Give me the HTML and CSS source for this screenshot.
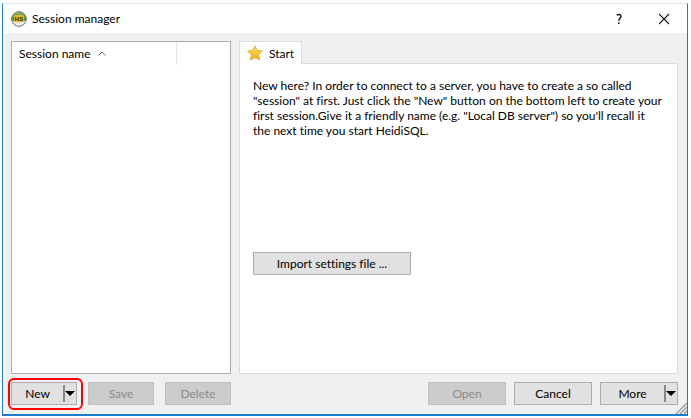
FILE: index.html
```html
<!DOCTYPE html>
<html lang="en">
<head>
<meta charset="utf-8">
<title>Session manager</title>
<link rel="stylesheet" href="styles.css">
</head>
<body>
<main class="window">
  <header class="titlebar">
    <svg class="app-icon" viewBox="0 0 16 16" aria-hidden="true">
      <defs>
        <linearGradient id="green" x1="0" y1="0" x2="0" y2="1"><stop offset="0" stop-color="#8ba878"/><stop offset="1" stop-color="#2f9a10"/></linearGradient>
        <linearGradient id="silver" x1="0" y1="0" x2="0" y2="1"><stop offset="0" stop-color="#b5b5b5"/><stop offset="1" stop-color="#f2f2f2"/></linearGradient>
      </defs>
      <circle cx="8" cy="8" r="7.4" fill="url(#silver)" stroke="#777" stroke-width="1"/>
      <path d="M.6 8.500A7.400 7.400 0 0 1 15.400 8.500L14 10H2Z" fill="url(#green)"/>
      <rect x="3" y="4" width="10" height="7" rx="2" fill="#efb92c"/>
      <text class="app-icon-text" x="8" y="10" text-anchor="middle">HS</text>
    </svg>
    <h1 class="title">Session manager</h1>
    <button class="caption-button" type="button" aria-label="Help">
      <svg width="12" height="12" viewBox="0 0 12 12" fill="none" stroke="#111" stroke-width="1.400"><path d="M2.700 2.200C3.700 1.300 7 .9 7 3.300C7 5.300 4.800 5.200 4.800 7.800M4.800 9.300V11"/></svg>
    </button>
    <button class="caption-button" type="button" aria-label="Close">
      <svg width="12" height="12" viewBox="0 0 12 12" fill="none" stroke="#111" stroke-width="1.100"><path d="M0 1L10 11M10 1L0 11"/></svg>
    </button>
  </header>
  <div class="client">
    <section class="sidebar">
      <table class="sessions">
        <thead>
          <tr>
            <th class="name-column">Session name
              <svg class="sort" width="8" height="5" viewBox="0 0 8 5" fill="none" stroke="#666" stroke-width="1"><path d="M.5 4.500L4 1L7.500 4.500"/></svg>
            </th>
            <th></th>
          </tr>
        </thead>
      </table>
    </section>
    <section class="details">
      <div class="tabs" role="tablist">
        <button class="tab" type="button" role="tab" aria-selected="true">
          <svg width="16" height="16" viewBox="0 0 16 16" aria-hidden="true">
            <defs><linearGradient id="gold" x1="0" y1="0" x2="0" y2="1"><stop offset="0" stop-color="#ffe05a"/><stop offset="1" stop-color="#eeb01c"/></linearGradient></defs>
            <path d="M8 .8L10.200 5.300L15.400 6L11.600 9.700L12.600 14.900L8 12.500L3.400 14.900L4.400 9.700L.6 6L5.800 5.300Z" fill="url(#gold)" stroke="#dda52e" stroke-width=".8" stroke-linejoin="round"/>
          </svg>
          Start
        </button>
      </div>
      <div class="page" role="tabpanel">
        <p class="intro">New here? In order to connect to a server, you have to create a so called<br>"session" at first. Just click the "New" button on the bottom left to create your<br>first session.Give it a friendly name (e.g. "Local DB server") so you'll recall it<br>the next time you start HeidiSQL.</p>
        <button class="button import" type="button">Import settings file ...</button>
      </div>
    </section>
    <div class="actions manage">
      <div class="highlight"><button class="button split" type="button"><span class="label">New</span><svg class="arrow" width="12" height="17" viewBox="0 0 12 17"><path d="M0 0H2V17H0Z" fill="#888"/><path d="M2 6H12L7 11Z" fill="#000"/></svg></button></div>
      <button class="button" type="button" disabled>Save</button>
      <button class="button" type="button" disabled>Delete</button>
    </div>
    <div class="actions commands">
      <button class="button" type="button" disabled>Open</button>
      <button class="button" type="button">Cancel</button>
      <button class="button split" type="button"><span class="label">More</span><svg class="arrow" width="12" height="17" viewBox="0 0 12 17"><path d="M0 0H2V17H0Z" fill="#888"/><path d="M2 6H12L7 11Z" fill="#000"/></svg></button>
    </div>
  </div>
  <svg class="grip" width="12" height="12" viewBox="0 0 12 12" fill="none" stroke="#999" stroke-width="1.300" aria-hidden="true"><path d="M1 12L12 1M5 12L12 5M9 12L12 9"/></svg>
</main>
</body>
</html>
```
FILE: styles.css
```css
* {
  box-sizing: border-box;
}

body {
  margin: 0;
  height: 100vh;
  padding: 3px 3px 2px 2px;
  background: #fff;
  color: #000;
  font: 12px/15px Lato, "Noto Sans", sans-serif;
  font-variant-ligatures: none;
}

button {
  font: inherit;
  font-variant-ligatures: none;
  color: inherit;
}

.window {
  position: relative;
  display: flex;
  flex-direction: column;
  height: 100%;
  border: 1px solid #1a7dcc;
  border-top-color: #d9e8f5;
  border-bottom-width: 2px;
  background: #f0f0f0;
}

.titlebar {
  display: flex;
  align-items: center;
  height: 29px;
  flex: none;
  padding-left: 8px;
  background: #fff;
}

.app-icon {
  width: 16px;
  height: 16px;
}

.app-icon-text {
  font: bold 6px "Liberation Sans", sans-serif;
  fill: #2a1800;
}

.title {
  flex: 1;
  margin: 0 0 0 5px;
  font-size: 12px;
  font-weight: 400;
}

.caption-button {
  display: flex;
  align-items: center;
  justify-content: center;
  width: 45px;
  height: 29px;
  padding: 0;
  border: 0;
  background: none;
}

.client {
  flex: 1;
  display: grid;
  grid-template-columns: 220px minmax(0, 1fr);
  grid-template-rows: 1fr 23px;
  gap: 8px;
  padding: 8px 9px 9px 8px;
}

.sidebar {
  border: 1px solid #abadb3;
  background: #fff;
}

.sessions {
  width: 100%;
  border-collapse: collapse;
  table-layout: fixed;
}

.sessions th {
  height: 23px;
  padding: 0 7px;
  font-weight: 400;
  text-align: left;
}

.sessions .name-column {
  width: 164px;
  border-right: 1px solid #e5e5e5;
}

.sort {
  margin-left: 4px;
  vertical-align: 2px;
}

.details {
  display: flex;
  flex-direction: column;
}

.tabs {
  display: flex;
}

.tab {
  z-index: 1;
  display: flex;
  align-items: center;
  gap: 6px;
  height: 23px;
  margin-bottom: -1px;
  padding: 0 7px;
  border: 1px solid #dcdcdc;
  border-bottom: 0;
  background: #fff;
}

.page {
  flex: 1;
  padding: 14px 13px;
  border: 1px solid #dcdcdc;
  background: #fff;
}

.intro {
  margin: 0 0 114px;
}

.actions {
  display: flex;
}

.manage {
  justify-content: space-between;
}

.commands {
  justify-content: flex-end;
  gap: 8px;
}

.button {
  display: flex;
  align-items: center;
  justify-content: center;
  width: 66px;
  height: 23px;
  padding: 0;
  border: 1px solid #adadad;
  background: #e1e1e1;
}

.button:disabled {
  border-color: #bfbfbf;
  background: #ccc;
  color: #8b8b8b;
}

.commands .button {
  width: 78px;
}

.button.import {
  width: 158px;
}

.button.split {
  padding-right: 1px;
}

.label {
  flex: 1;
}

.highlight {
  position: relative;
}

.highlight::after {
  content: "";
  position: absolute;
  inset: -4px -6px -5px -3px;
  border: 2px solid #f00;
  border-radius: 6px;
  pointer-events: none;
}
.grip {
  position: absolute;
  right: 0;
  bottom: 0;
}
```
